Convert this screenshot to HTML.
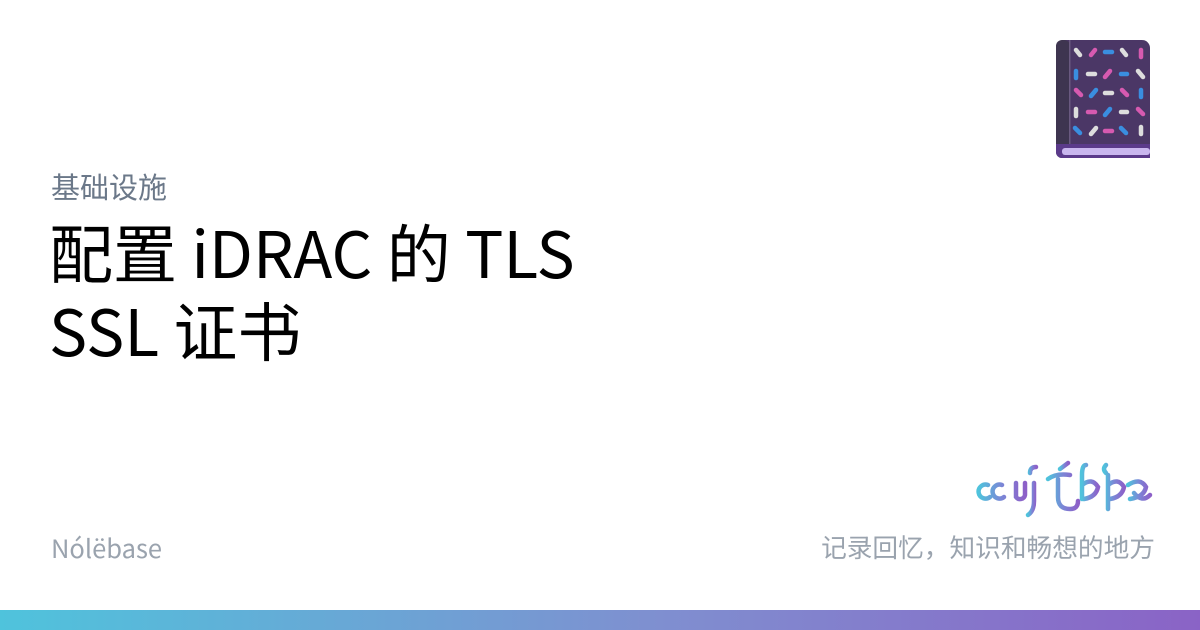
<!DOCTYPE html>
<html><head><meta charset="utf-8"><style>
body{margin:0;width:1200px;height:630px;background:#fff;position:relative;overflow:hidden;font-family:"Noto Sans CJK SC","Liberation Sans",sans-serif}
div{white-space:nowrap}
.cat{position:absolute;left:51px;top:169px;font-size:29px;line-height:34px;color:#6b7889}
.title{position:absolute;left:49px;top:212px;font-size:64px;line-height:78px;color:#000}
.nb{position:absolute;left:51px;top:532px;font-size:25.5px;line-height:32px;color:#9aa3ae}
.rt{position:absolute;right:45px;top:531px;font-size:25.7px;line-height:32px;color:#9aa3ae}
.bar{position:absolute;left:0;bottom:0;width:1200px;height:20px;background:linear-gradient(90deg,#4fc3dc,#7f8fd0 55%,#8a63c6)}
</style></head><body>
<svg style="position:absolute;left:1054px;top:38px" width="98" height="122" viewBox="0 0 98 122">
<rect x="2" y="2" width="94" height="118" rx="8" fill="#4b3766"/>
<rect x="2" y="2" width="14" height="118" rx="6" fill="#3e3550"/>
<rect x="15" y="2" width="1.5" height="108" fill="#6a5a80"/>
<path d="M2 106 h94 v14 h-88 a6 6 0 0 1 -6 -6z" fill="#5b3a8a"/>
<rect x="8" y="110" width="88" height="7" rx="3" fill="#c9b6ee"/>
<g stroke-width="4.5" stroke-linecap="round">
<line x1="22" y1="12" x2="26" y2="17" stroke="#ddd"/><line x1="37" y1="17" x2="41" y2="12" stroke="#d65ab0"/><line x1="51" y1="14" x2="58" y2="14" stroke="#3a8ee0"/><line x1="68" y1="12" x2="72" y2="17" stroke="#ddd"/><line x1="87" y1="12" x2="87" y2="19" stroke="#d65ab0"/>
<line x1="22" y1="33" x2="22" y2="40" stroke="#3a8ee0"/><line x1="34" y1="36" x2="41" y2="36" stroke="#ddd"/><line x1="51" y1="39" x2="56" y2="33" stroke="#d65ab0"/><line x1="67" y1="36" x2="73" y2="36" stroke="#3a8ee0"/><line x1="84" y1="33" x2="89" y2="39" stroke="#ddd"/>
<line x1="22" y1="52" x2="27" y2="57" stroke="#d65ab0"/><line x1="37" y1="58" x2="42" y2="52" stroke="#3a8ee0"/><line x1="51" y1="55" x2="58" y2="55" stroke="#ddd"/><line x1="68" y1="52" x2="73" y2="57" stroke="#d65ab0"/><line x1="87" y1="52" x2="87" y2="59" stroke="#3a8ee0"/>
<line x1="22" y1="71" x2="22" y2="78" stroke="#ddd"/><line x1="34" y1="74" x2="41" y2="74" stroke="#d65ab0"/><line x1="51" y1="77" x2="56" y2="71" stroke="#3a8ee0"/><line x1="67" y1="74" x2="73" y2="74" stroke="#ddd"/><line x1="84" y1="71" x2="89" y2="76" stroke="#d65ab0"/>
<line x1="21" y1="90" x2="26" y2="95" stroke="#3a8ee0"/><line x1="37" y1="96" x2="42" y2="90" stroke="#ddd"/><line x1="51" y1="93" x2="58" y2="93" stroke="#d65ab0"/><line x1="67" y1="90" x2="72" y2="95" stroke="#3a8ee0"/><line x1="87" y1="89" x2="87" y2="96" stroke="#ddd"/>
</g></svg>
<svg style="position:absolute;left:970px;top:455px" width="185" height="70" viewBox="0 0 185 70">
<defs><linearGradient id="g" x1="0" x2="1"><stop offset="0" stop-color="#4fc3dc"/><stop offset="0.5" stop-color="#7b86d6"/><stop offset="1" stop-color="#8d60c8"/></linearGradient></defs>
<g fill="none" stroke="url(#g)" stroke-width="4.5" stroke-linecap="round">
<path d="M18 30 a7 7 0 1 0 2 12 M32 30 a7 7 0 1 0 2 12 M46 28 v14 a5 5 0 0 0 9 -2 v-12 M55 40 v-8"/>
<path d="M64 28 v18 q0 10 -6 14 M66 12 q-6 0 -6 6"/>
<path d="M78 24 q8 -6 22 -4 M88 24 v18 q0 12 12 12 q8 0 8 -8"/>
<path d="M98 8 l-8 6"/>
<path d="M116 10 q-4 0 -4 10 v24 M112 30 q10 -8 16 2 q-2 10 -14 12"/>
<path d="M138 30 q10 -8 16 2 q-2 10 -14 12 M138 20 v34 M136 10 q-4 4 0 8"/>
<path d="M158 30 q12 -8 18 2 q-2 10 -16 12 M164 38 q8 10 16 2"/>
</g></svg>
<div class="cat">基础设施</div>
<div class="title">配置 iDRAC 的 TLS<br>SSL 证书</div>
<div class="nb">Nólëbase</div>
<div class="rt">记录回忆，知识和畅想的地方</div>
<div class="bar"></div>
</body></html>
